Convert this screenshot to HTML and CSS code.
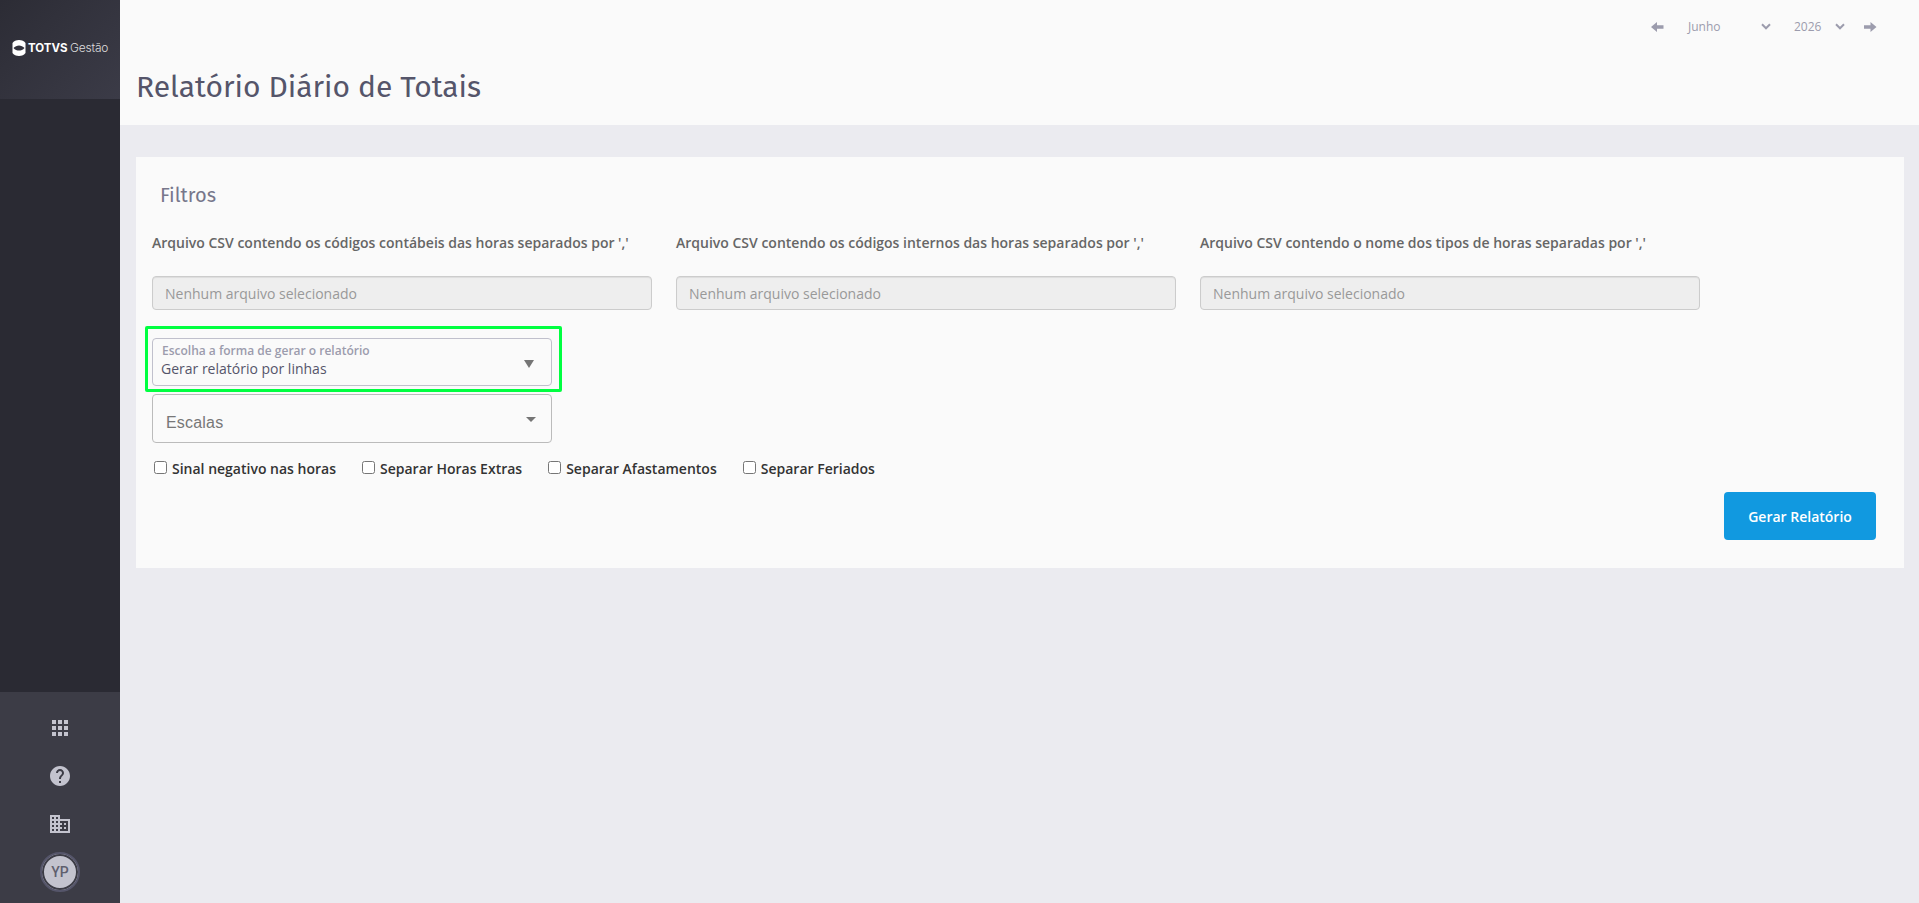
FILE: index.html
```html
<!DOCTYPE html>
<html lang="pt-BR">
<head>
    <meta charset="utf-8">
    <title>Relatório Diário de Totais</title>
    <link rel="stylesheet" href="styles.css">
</head>
<body>

<aside class="sidebar">
    <div class="sidebar-logo">
        <svg class="logo-mark" width="14" height="16" viewBox="0 0 14 16">
            <path fill="#fff" d="M7 0C9.800 0 12.300 1.200 13.500 3V13C12.300 14.800 9.800 16 7 16S1.700 14.800.5 13V3C1.700 1.200 4.200 0 7 0z"/>
            <path fill="#32323c" d="M1.500 8C3 6.200 5 5.400 7 5.400S11 6.200 12.500 8C11 9.800 9 10.600 7 10.600S3 9.800 1.500 8z"/>
        </svg>
        <span class="logo-name">TOTVS</span>
        <span class="logo-product">Gestão</span>
    </div>
    <nav class="sidebar-menu">
        <a class="menu-item"><svg width="24" height="24" viewBox="0 0 24 24"><path d="M4 8h4V4H4v4zm6 12h4v-4h-4v4zm-6 0h4v-4H4v4zm0-6h4v-4H4v4zm6 0h4v-4h-4v4zm6-10v4h4V4h-4zm-6 4h4V4h-4v4zm6 6h4v-4h-4v4zm0 6h4v-4h-4v4z"/></svg></a>
        <a class="menu-item"><svg width="24" height="24" viewBox="0 0 24 24"><path d="M12 2C6.480 2 2 6.480 2 12s4.480 10 10 10 10-4.480 10-10S17.520 2 12 2zm1 17h-2v-2h2v2zm2.070-7.750l-.9.920C13.450 12.900 13 13.500 13 15h-2v-.5c0-1.100.450-2.100 1.170-2.830l1.240-1.260c.370-.360.590-.860.590-1.410 0-1.100-.9-2-2-2s-2 .9-2 2H8c0-2.210 1.790-4 4-4s4 1.790 4 4c0 .880-.360 1.680-.930 2.250z"/></svg></a>
        <a class="menu-item"><svg width="24" height="24" viewBox="0 0 24 24"><path d="M12 7V3H2v18h20V7H12zM6 19H4v-2h2v2zm0-4H4v-2h2v2zm0-4H4V9h2v2zm0-4H4V5h2v2zm4 12H8v-2h2v2zm0-4H8v-2h2v2zm0-4H8V9h2v2zm0-4H8V5h2v2zm10 12h-8v-2h2v-2h-2v-2h2v-2h-2V9h8v10zm-2-8h-2v2h2v-2zm0 4h-2v2h2v-2z"/></svg></a>
        <a class="menu-item"><span class="avatar">YP</span></a>
    </nav>
</aside>

<main class="content">
    <header class="page-header">
        <div class="period">
            <svg class="arrow" width="13" height="10" viewBox="0 0 13 10"><path d="M0 5l6-5v3.200h6.500v3.600H6V10z"/></svg>
            <div class="period-select month">Junho <svg width="10" height="7" viewBox="0 0 10 7"><path d="M1 1.300l4 4 4-4"/></svg></div>
            <div class="period-select year">2026 <svg width="10" height="7" viewBox="0 0 10 7"><path d="M1 1.300l4 4 4-4"/></svg></div>
            <svg class="arrow" width="13" height="10" viewBox="0 0 13 10"><path d="M12.500 5l-6-5v3.200H0v3.600h6.500V10z"/></svg>
        </div>
        <h1 class="page-title">Relatório Diário de Totais</h1>
    </header>

    <section class="panel">
        <h2 class="panel-title">Filtros</h2>

        <div class="files">
            <div class="file">
                <label class="file-label">Arquivo CSV contendo os códigos contábeis das horas separados por ','</label>
                <div class="file-input">Nenhum arquivo selecionado</div>
            </div>
            <div class="file">
                <label class="file-label">Arquivo CSV contendo os códigos internos das horas separados por ','</label>
                <div class="file-input">Nenhum arquivo selecionado</div>
            </div>
            <div class="file">
                <label class="file-label">Arquivo CSV contendo o nome dos tipos de horas separadas por ','</label>
                <div class="file-input">Nenhum arquivo selecionado</div>
            </div>
        </div>

        <div class="highlight">
            <div class="select select-mode">
                <div>
                    <div class="select-label">Escolha a forma de gerar o relatório</div>
                    <div class="select-value">Gerar relatório por linhas</div>
                </div>
                <svg width="10" height="8" viewBox="0 0 10 8"><path d="M0 0h10L5 8z"/></svg>
            </div>
        </div>
        <div class="select select-scale">
            <span>Escalas</span>
            <svg width="10" height="5" viewBox="0 0 10 5"><path d="M0 0h10L5 5z"/></svg>
        </div>

        <div class="options">
            <label class="option"><input type="checkbox">Sinal negativo nas horas</label>
            <label class="option"><input type="checkbox">Separar Horas Extras</label>
            <label class="option"><input type="checkbox">Separar Afastamentos</label>
            <label class="option"><input type="checkbox">Separar Feriados</label>
        </div>

        <div class="actions">
            <button class="button" type="button">Gerar Relatório</button>
        </div>
    </section>
</main>

</body>
</html>
```
FILE: styles.css
```css
* { box-sizing: border-box; }
body { display: flex; height: 903px; margin: 0; background: #ebebf0; font-family: "Open Sans", sans-serif; font-size: 14px; overflow: hidden; }

.sidebar { display: flex; flex-direction: column; flex: none; width: 120px; background: #2a2a33; }
.sidebar-logo { display: flex; align-items: center; height: 99px; padding: 0 0 3px 12px; background: linear-gradient(135deg, #2c2c35, #3b3b47); color: #fff; white-space: nowrap; }
.logo-mark { flex: none; margin-right: 2px; }
.logo-name { width: 42px; font: 700 11.5px/16px Inter, sans-serif; letter-spacing: 0; }
.logo-product { color: #ddd; font: 300 12px/16px Inter, sans-serif; letter-spacing: -0.2px; }
.sidebar-menu { display: flex; flex-direction: column; height: 211px; margin-top: auto; padding-top: 12px; background: #3c3c46; }
.menu-item { display: flex; align-items: center; justify-content: center; height: 48px; }
.menu-item svg { fill: #c3c3ce; }
.avatar { width: 40px; height: 40px; border: 2px solid #55556a; border-radius: 50%; background: #c3c3ce; box-shadow: inset 0 0 0 2px #3c3c46; color: #5f5f6e; font: 500 14px/36px Roboto, sans-serif; text-align: center; }

.content { flex: 1; }
.page-header { height: 125px; padding: 16px 42px 0 16px; background: #fafafa; }
.period { display: flex; align-items: center; justify-content: flex-end; height: 21px; color: #9c9cad; font-size: 12px; }
.arrow { fill: #9c9cad; }
.period-select { display: flex; align-items: center; justify-content: space-between; }
.period-select svg { fill: none; stroke: #9c9cad; stroke-width: 2; }
.month { width: 83px; margin-left: 24px; }
.year { width: 51px; margin: 0 19px 0 23px; }
.page-title { margin: 30px 0 0; color: #55556a; font: 400 30px/40px "Fira Sans", "Noto Sans", sans-serif; }

.panel { height: 411px; margin: 32px 15px 0 16px; padding: 22px 28px 0 16px; background: #fafafa; }
.panel-title { margin: 0 0 0 8px; color: #77778b; font: 400 20px/32px "Fira Sans", "Noto Sans", sans-serif; }

.files { display: flex; gap: 24px; margin-top: 22px; }
.file { width: 500px; }
.file-label { display: block; height: 43px; color: #666; font-weight: 600; line-height: 20px; }
.file-input { height: 34px; padding: 0 12px; border: 1px solid #ccc; border-radius: 4px; background: #eee; box-shadow: inset 0 1px 1px rgba(0, 0, 0, 0.075); color: #999; line-height: 33px; }

.highlight { width: 417px; height: 66px; margin: 16px 0 0 -7px; padding: 9px 4px; border: 3px solid #00ff40; border-radius: 2px; }
.select { display: flex; justify-content: space-between; width: 400px; border: 1px solid #bbb; border-radius: 4px; }
.select svg { fill: #757575; }
.select-mode { height: 48px; padding: 4px 17px 0 8px; border-color: #c0c0cc; }
.select-mode svg { margin-top: 17px; }
.select-label { color: #9c9cad; font-size: 12px; font-weight: 600; line-height: 16px; padding-left: 1px; }
.select-value { color: #55556a; line-height: 20px; }
.select-scale { height: 49px; margin-top: 2px; padding: 18px 15px 0 13px; color: #777; font: 16px/20px "Liberation Sans", sans-serif; letter-spacing: 0.2px; }
.select-scale svg { margin-top: 4px; }

.options { display: flex; gap: 26px; margin: 16px 0 0 2px; }
.option { display: flex; align-items: center; height: 20px; color: #333; font-weight: 600; line-height: 20px; }
.option input { width: 13px; height: 13px; margin: -3px 5px 0 0; }

.actions { display: flex; justify-content: flex-end; margin-top: 13px; }
.button { width: 152px; height: 48px; padding: 0; border: 0; border-radius: 4px; background: #1199e0; color: #fff; font: 600 14px "Open Sans", sans-serif; }
```
